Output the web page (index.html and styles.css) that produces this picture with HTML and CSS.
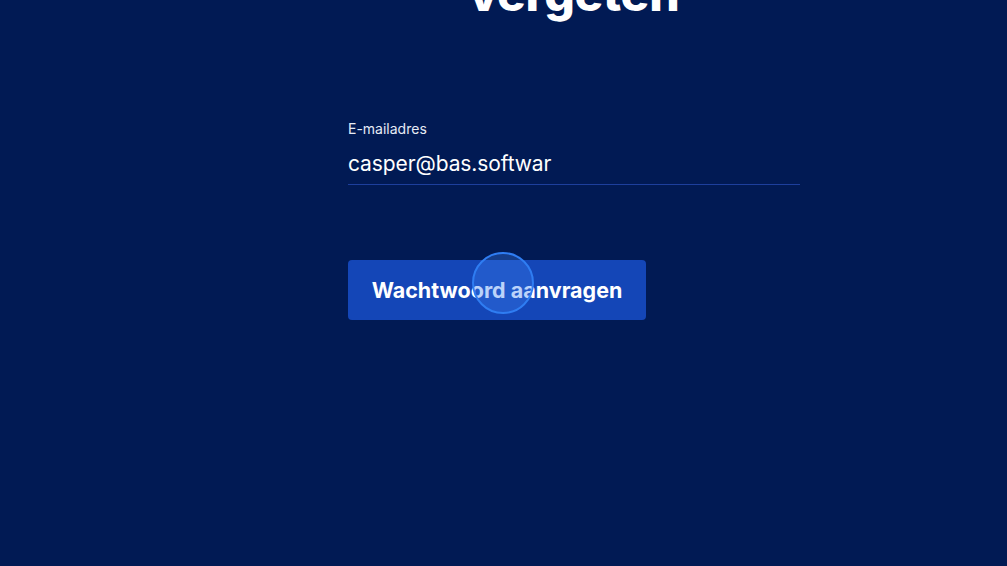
FILE: index.html
```html
<!DOCTYPE html>
<html lang="nl">
<head>
<meta charset="utf-8">
<title>Wachtwoord vergeten</title>
<link rel="stylesheet" href="styles.css">
</head>
<body>
<main class="page">
  <section class="form">
    <h1 class="title">Wachtwoord<br>vergeten</h1>
    <label class="field">
      <span class="label">E-mailadres</span>
      <span class="input">casper@bas.softwar</span>
    </label>
    <div class="actions">
      <button class="btn">Wachtwoord aanvragen<span class="ripple"></span></button>
    </div>
  </section>
</main>
</body>
</html>
```
FILE: styles.css
```css
* { box-sizing: border-box; }
html, body {
  margin: 0;
  height: 100%;
  background: #011a54;
  overflow: hidden;
}
body {
  font-family: "Inter", "Noto Sans", sans-serif;
  color: #ffffff;
}
.page {
  display: flex;
  justify-content: center;
  padding-left: 348px;
  padding-right: 207px;
}
.form {
  width: 452px;
  display: flex;
  flex-direction: column;
  margin-top: -90px;
}
.title {
  margin: 0;
  text-align: center;
  font-size: 48px;
  line-height: 56px;
  font-weight: 800;
  letter-spacing: -0.3px;
}
.field {
  display: flex;
  flex-direction: column;
  margin-top: 97px;
  border-bottom: 1px solid #1d3f9c;
}
.label {
  font-size: 14px;
  line-height: 20px;
  color: #e6ebf5;
}
.input {
  font-size: 21px;
  line-height: 28px;
  margin-top: 11px;
  padding-bottom: 6px;
  letter-spacing: -0.1px;
}
.actions {
  margin-top: 75px;
  display: flex;
}
.btn {
  position: relative;
  width: 298px;
  height: 60px;
  border: 0;
  border-radius: 4px;
  background: #1446b7;
  color: #ffffff;
  font-family: inherit;
  font-size: 21.5px;
  font-weight: 700;
  letter-spacing: 0;
  padding: 0;
  cursor: pointer;
}
.ripple {
  position: absolute;
  left: 124px;
  top: -8px;
  width: 62px;
  height: 62px;
  border-radius: 50%;
  border: 2px solid #2f7df2;
  background: rgba(60, 130, 240, 0.35);
}
```
